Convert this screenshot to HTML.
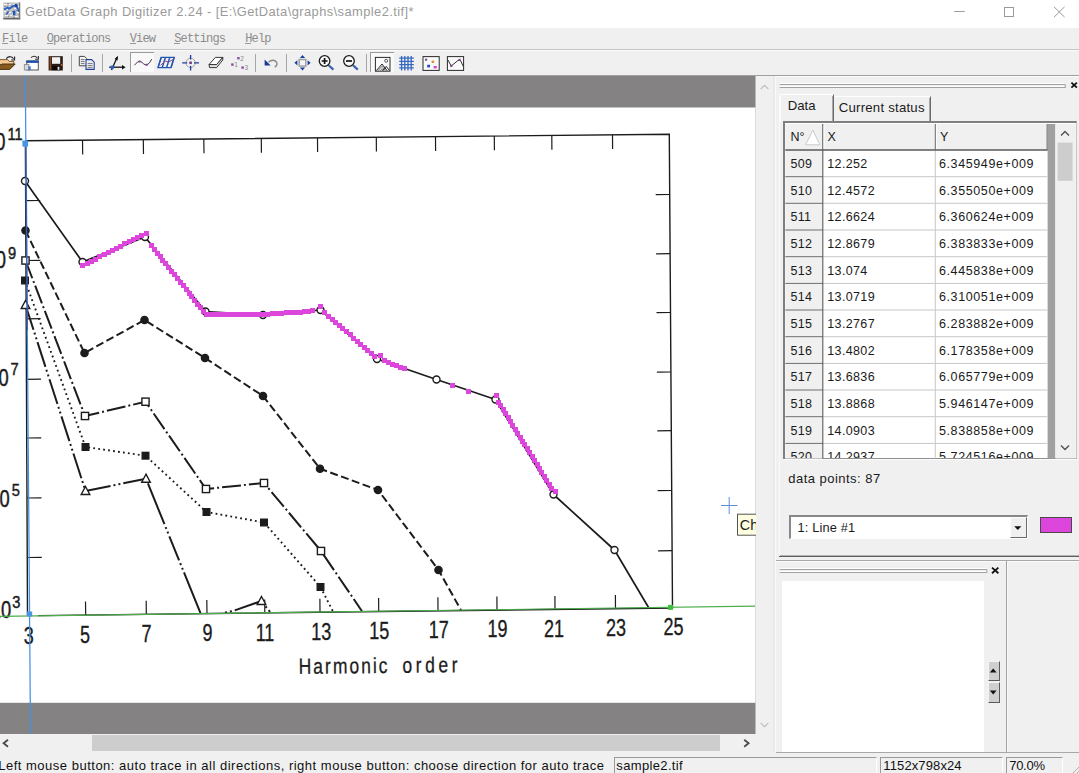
<!DOCTYPE html>
<html>
<head>
<meta charset="utf-8">
<title>GetData Graph Digitizer</title>
<style>
html,body{margin:0;padding:0;background:#f0f0f0;}
body{width:1079px;height:773px;overflow:hidden;font-family:"Liberation Sans",sans-serif;}
#app{position:relative;width:1079px;height:773px;overflow:hidden;background:#f0f0f0;}
.abs{position:absolute;}
#titlebar{left:0;top:0;width:1079px;height:28px;background:#fff;}
#title{left:25px;top:3px;font-size:12.9px;letter-spacing:0.42px;color:#9a9a9a;white-space:nowrap;line-height:18px;}
#menubar{left:0;top:28px;width:1079px;height:21px;background:#f0f0f0;}
.mi{position:absolute;top:5px;font-family:"Liberation Mono",monospace;font-size:12px;letter-spacing:-0.83px;color:#8c8c8c;line-height:12px;white-space:nowrap;}
.mi u{text-decoration:none;position:relative;}.mi u::after{content:"";position:absolute;left:0.3px;width:6px;top:11.4px;height:1px;background:#9a9a9a;}
#toolbar{left:0;top:49px;width:1079px;height:27px;background:#f0f0f0;}
.tsep{position:absolute;top:5px;width:1px;height:18px;background:#a6a6a6;}
.tpress{position:absolute;top:3px;height:21px;background:#f9f9f9;border-left:1px solid #9a9a9a;border-top:1px solid #9a9a9a;box-sizing:border-box;}
.cell{position:absolute;font-size:12.5px;color:#1a1a1a;white-space:nowrap;line-height:14px;}
.sb{font-size:13px;color:#111;white-space:nowrap;line-height:16px;}
</style>
</head>
<body>
<div id="app">

<!-- TITLE BAR -->
<div id="titlebar" class="abs">
  <svg class="abs" style="left:3px;top:2px" width="18" height="18" viewBox="0 0 18 18">
    <rect x="0.3" y="0.5" width="16.9" height="16.9" fill="#c2c2c2"/>
    <path d="M1 2.5h3M6 2.5h2M10 2.5h4M2 5.5h2M11 6.5h2M1 9.5h2M5 10.5h3M14 10.5h2M2 13.5h3M7 13.5h2M12 14.5h3M4 7.5h1M9 12.5h1M15 4.5h1" stroke="#f4f4f4" stroke-width="1"/>
    <path d="M4 1.5h2M8 3.5h3M1 4.5h2M6 6.5h2M13 8.5h2M3 11.5h2M10 15.5h2M5 14.5h1M15 12.5h1M9 9.5h1" stroke="#8e8e8e" stroke-width="1"/>
    <rect x="0.3" y="15.9" width="16.9" height="1.5" fill="#646464"/>
    <rect x="16" y="0.5" width="1.2" height="16.9" fill="#7a7a7a"/>
    <path d="M1 7.6L4.5 5.4L6 6.8L9.5 4.6L13 3L16.2 9.6" fill="none" stroke="#2a62c8" stroke-width="1.8"/>
    <path d="M3.2 12.6l2.4-3.4" stroke="#2a62c8" stroke-width="1.5"/>
    <rect x="9.9" y="8.7" width="2.5" height="4.6" fill="#1d55b8"/>
    <rect x="12" y="2.2" width="2.4" height="2.8" fill="#173f9c"/>
  </svg>
  <div id="title" class="abs">GetData Graph Digitizer 2.24 - [E:\GetData\graphs\sample2.tif]*</div>
  <svg class="abs" style="left:940px;top:0" width="139" height="28" viewBox="940 0 139 28">
    <path d="M954.2 11.5h10.5" stroke="#9a9a9a" stroke-width="1"/>
    <rect x="1004.5" y="7.5" width="9" height="9" fill="none" stroke="#9a9a9a" stroke-width="1"/>
    <path d="M1054 6.8l10.6 10.3M1064.6 6.8L1054 17.1" stroke="#9a9a9a" stroke-width="1"/>
  </svg>
</div>

<!-- MENU BAR -->
<div id="menubar" class="abs">
  <span class="mi" style="left:2px"><u>F</u>ile</span>
  <span class="mi" style="left:46.7px"><u>O</u>perations</span>
  <span class="mi" style="left:129.7px"><u>V</u>iew</span>
  <span class="mi" style="left:174.2px"><u>S</u>ettings</span>
  <span class="mi" style="left:245.2px"><u>H</u>elp</span>
</div>
<div class="abs" style="left:0;top:49px;width:1079px;height:1px;background:#c4c4c4"></div>
<div class="abs" style="left:0;top:50px;width:1079px;height:1px;background:#fbfbfb"></div>

<!-- TOOLBAR -->
<div id="toolbar" class="abs" style="top:51px;height:25px"></div>
<div class="tpress" style="left:130.3px;top:51.7px;width:23.5px;height:20.8px"></div>
<div class="tpress" style="left:370.3px;top:51.7px;width:23.8px;height:20.8px"></div>
<div class="tsep" style="left:70.6px;top:53.6px"></div>
<div class="tsep" style="left:101.5px;top:53.6px"></div>
<div class="tsep" style="left:255.2px;top:53.6px"></div>
<div class="tsep" style="left:286.1px;top:53.6px"></div>
<div class="tsep" style="left:366px;top:53.6px"></div>
<svg class="abs" style="left:0;top:50px" width="480" height="26" viewBox="0 50 480 26">
  <!-- open folder -->
  <g>
    <path d="M-2 59.6h9.6l1.6 1.8h4.6v3.2H-2z" fill="#f5ca92" stroke="#6a4a20" stroke-width="0.9"/>
    <path d="M-3.6 69.4L1.8 64h13.4L9.8 69.4z" fill="#8a5a1c" stroke="#3a2a10" stroke-width="0.9"/>
    <path d="M6.2 58.6c2.4-2.6 5.6-2.6 7.4 0.2" fill="none" stroke="#222" stroke-width="1.1"/>
    <path d="M14.6 56.6v3.4h-3.4" fill="none" stroke="#222" stroke-width="1.1"/>
  </g>
  <!-- reopen window -->
  <g>
    <rect x="26.8" y="61" width="11.5" height="9" fill="#fff" stroke="#555" stroke-width="1"/>
    <rect x="26.3" y="60.5" width="12.5" height="2.4" fill="#1f4fa8"/>
    <rect x="24.3" y="64.5" width="4.6" height="5.5" fill="#d8d8d8" stroke="#888" stroke-width="0.8"/>
    <rect x="28.3" y="66.3" width="2.4" height="3.8" fill="#4a78d0"/>
    <path d="M31 57.6c2.2-2 5-1.8 6.4 0.6" fill="none" stroke="#333" stroke-width="1.1"/>
    <path d="M38.4 56v3.3h-3.3" fill="none" stroke="#333" stroke-width="1.1"/>
  </g>
  <!-- save -->
  <g>
    <rect x="48.6" y="56.2" width="14.2" height="14.3" fill="#2a1a14"/>
    <rect x="49.6" y="56.8" width="1.7" height="13" fill="#8a4a24"/>
    <rect x="52" y="57.2" width="8.2" height="6.6" fill="#f2f2f2"/>
    <rect x="52.3" y="66.2" width="7.6" height="4" fill="#0a0a0a"/>
    <rect x="57.6" y="66.8" width="1.8" height="3" fill="#e8e8e8"/>
    <rect x="60.8" y="64.2" width="1.4" height="1.4" fill="#d88a2a"/>
  </g>
  <!-- copy -->
  <g>
    <path d="M79.3 56.4h5.2l2 2v7.4h-7.2z" fill="#f4f4f4" stroke="#444" stroke-width="1"/>
    <path d="M80.8 59.6h3.8M80.8 61.6h3.8M80.8 63.6h3.8" stroke="#666" stroke-width="0.9"/>
    <path d="M86 59.6h5.6l2.6 2.6v7.2H86z" fill="#f4f4f4" stroke="#1f3f9a" stroke-width="1.1"/>
    <path d="M87.6 63.4h5M87.6 65.4h5M87.6 67.4h5" stroke="#666" stroke-width="0.9"/>
  </g>
  <!-- axes -->
  <g>
    <path d="M111.5 70L117.2 57.2" stroke="#111" stroke-width="1.3"/>
    <path d="M109.2 67.2h13.8" stroke="#111" stroke-width="1.3"/>
    <path d="M118 55.8l-3.4 3.2l3 1.4z" fill="#111"/>
    <path d="M125.6 67.2l-3.6-2.2v4.4z" fill="#111"/>
    <rect x="110.6" y="65.6" width="3.2" height="3.2" fill="#2a5fd0"/>
  </g>
  <!-- curve (pressed) -->
  <g>
    <path d="M134.6 65.2c2.2-3 4.4-4.6 6.2-3.6c2 1 3.4 3.6 5.6 3.2c2.4-0.4 3.8-2.8 5.2-5.6" fill="none" stroke="#333" stroke-width="1"/>
    <rect x="138.6" y="60.6" width="2" height="2" fill="#8a4aa0"/>
    <rect x="145.6" y="63.8" width="2" height="2" fill="#8a4aa0"/>
  </g>
  <!-- grid parallelogram -->
  <g fill="none" stroke="#2456b0" stroke-width="1.2">
    <path d="M161.2 57.4h13L171 67.6h-13z"/>
    <path d="M165.4 57.4l-3.2 10.2M169.8 57.4l-3.2 10.2" stroke-width="1.5"/><path d="M161.2 57.4L158 67.6M174.2 57.4L171 67.6" stroke-width="1.5"/>
    <path d="M160.6 65.4l4.2-4.4l4 1l5.4-3.4" stroke="#8a4aa0" stroke-width="1"/>
  </g>
  <!-- crosshair -->
  <g>
    <circle cx="190.6" cy="62.8" r="4.6" fill="none" stroke="#9a9a9a" stroke-width="0.9"/>
    <path d="M190.6 55v4.6M190.6 66v4.6M182.2 62.8h5M194 62.8h5" stroke="#1a3fa0" stroke-width="1.3"/>
    <rect x="189.3" y="61.5" width="2.6" height="2.6" fill="#7a3a8a"/>
  </g>
  <!-- eraser -->
  <g>
    <path d="M209 64.6l6.4-7.2h7.4l-6.2 7.2z" fill="#fff" stroke="#222" stroke-width="0.9" stroke-linejoin="round"/>
    <path d="M209 64.6h7.6l6.2-7.2v2.6l-6.2 7.6h-7z" fill="#e4e4e4" stroke="#222" stroke-width="0.9" stroke-linejoin="round"/>
  </g>
  <!-- numbered points -->
  <g>
    <rect x="231.2" y="63.4" width="2.4" height="2.4" fill="#8a4aa0"/>
    <rect x="237.2" y="57" width="2.4" height="2.4" fill="#8a4aa0"/>
    <rect x="241.4" y="66.4" width="2.4" height="2.4" fill="#8a4aa0"/>
    <text x="234.2" y="67.4" font-size="6.5" fill="#8a8a8a" font-family="'Liberation Sans',sans-serif">1</text>
    <text x="240.2" y="61" font-size="6.5" fill="#8a8a8a" font-family="'Liberation Sans',sans-serif">2</text>
    <text x="244.6" y="70.4" font-size="6.5" fill="#8a8a8a" font-family="'Liberation Sans',sans-serif">3</text>
  </g>
  <!-- undo -->
  <g>
    <path d="M268.5 62.2c2.6-2.6 6.4-2.6 8 0c1.2 2.2 0 4-1.8 4.8" fill="none" stroke="#8a8a8a" stroke-width="1.4"/>
    <path d="M264.6 59.6v6h6z" fill="#1a3a9a"/>
  </g>
  <!-- pan -->
  <g>
    <rect x="299.2" y="59.5" width="6.6" height="6.6" fill="#f4f4f4" stroke="#a0a0a0" stroke-width="1.5"/>
    <path d="M302.5 55l2.6 3h-5.2zM302.5 70.6l2.6-3h-5.2zM294.4 62.8l3-2.6v5.2zM310.6 62.8l-3-2.6v5.2z" fill="#1a3fa0"/>
  </g>
  <!-- zoom in -->
  <g>
    <path d="M328.6 65.2l4.8 4.4" stroke="#3a62b0" stroke-width="2.2"/>
    <circle cx="324.6" cy="61" r="5.3" fill="#fafafa" stroke="#1a1a1a" stroke-width="1.3"/>
    <path d="M321.6 61h6M324.6 58v6" stroke="#111" stroke-width="1.7"/>
  </g>
  <!-- zoom out -->
  <g>
    <path d="M353 65.2l4.8 4.4" stroke="#3a62b0" stroke-width="2.2"/>
    <circle cx="349" cy="61" r="5.3" fill="#fafafa" stroke="#1a1a1a" stroke-width="1.3"/>
    <path d="M346 61h6" stroke="#111" stroke-width="1.7"/>
  </g>
  <!-- image -->
  <g>
    <rect x="375.4" y="57.4" width="14.6" height="13.8" fill="#fafafa" stroke="#2a2a2a" stroke-width="1"/>
    <circle cx="386.2" cy="60.8" r="1.5" fill="none" stroke="#444" stroke-width="0.9"/>
    <path d="M376.4 70.6l5.6-6.6l5 6.6M382.6 70.6l3.6-4.2l3.4 4.2" fill="none" stroke="#222" stroke-width="1"/>
    <path d="M378.2 70.6l3.8-4.4l3.4 4.4M380.4 70.6l1.6-2l1.6 2" fill="none" stroke="#555" stroke-width="0.8"/>
  </g>
  <!-- grid # -->
  <g stroke="#3468c0" stroke-width="1.3">
    <path d="M401.6 56v14.6M404.8 56v14.6M408 56v14.6M411.2 56v14.6"/>
    <path d="M399.2 58.2h14.6M399.2 61.4h14.6M399.2 64.6h14.6M399.2 67.8h14.6"/>
  </g>
  <!-- points box -->
  <g>
    <rect x="423" y="56.6" width="16.2" height="13.8" fill="#fafafa" stroke="#2a2a2a" stroke-width="1"/>
    <rect x="425" y="58.6" width="2.2" height="2.2" fill="#7a5a90"/>
    <rect x="431.6" y="60.6" width="2.6" height="2.4" fill="#e09030"/>
    <rect x="427.2" y="64.8" width="2.8" height="2.6" fill="#1a4fc0"/>
    <rect x="433.6" y="66" width="3.2" height="2.4" fill="#e040e0"/>
  </g>
  <!-- line box -->
  <g>
    <rect x="447.4" y="56.6" width="16.2" height="13.8" fill="#fafafa" stroke="#2a2a2a" stroke-width="1"/>
    <path d="M448 60l3.2 6l6.6-5.4l2.6-0.4l3 6.4" fill="none" stroke="#333" stroke-width="1"/>
    <rect x="450.2" y="64.8" width="2.2" height="2.2" fill="#7a4a90"/>
    <rect x="458.4" y="58.8" width="2.2" height="2.2" fill="#7a4a90"/>
  </g>
</svg>


<div class="abs" style="left:0;top:75px;width:1079px;height:1px;background:#a0a0a0"></div>
<div class="abs" style="left:776px;top:76px;width:303px;height:1px;background:#fdfdfd"></div>

<!-- CANVAS -->
<svg class="abs" style="left:0;top:76px" width="755.5" height="658" viewBox="0 76 755.5 658" preserveAspectRatio="none" font-family="'Liberation Sans',sans-serif">
<rect x="0" y="76" width="755.5" height="658" fill="#858283"/>
<rect x="0" y="107.5" width="755.5" height="595.3" fill="#ffffff"/>
<g stroke="#1c1c1c" fill="none" stroke-linecap="butt">
<path d="M25.4 141L27.5 615M38 615.6L672.5 608.0L669.3 134.2L25.5 140.8" stroke-width="1.4"/>
<path d="M82.5 140.2L82.7 154.5M143.3 139.6L143.5 153.9M203.8 139.0L204.0 153.3M261.3 138.4L261.4 152.7M317.5 137.8L317.6 152.1M376.3 137.2L376.4 151.5M435.5 136.6L435.6 150.9M494.3 136.0L494.4 150.3M551.8 135.4L551.9 149.7M612.5 134.8L612.6 149.1M85.7 615.0L85.5 601.5M146.3 614.3L146.2 600.8M207.0 613.6L206.8 600.1M264.8 612.9L264.7 599.4M320.0 612.2L319.9 598.7M378.7 611.5L378.6 598.0M438.0 610.8L437.9 597.3M497.0 610.1L496.9 596.6M555.0 609.4L554.9 595.9M615.5 608.6L615.4 595.1M25.7 200.7L40.2 200.5M25.9 260.5L40.4 260.4M26.2 318.8L40.7 318.7M26.5 379.3L41.0 379.2M26.7 438.0L41.2 437.9M27.0 498.0L41.5 497.9M27.3 557.5L41.8 557.4M669.7 194.5L655.7 194.7M670.1 253.7L656.1 253.8M670.5 312.5L656.5 312.6M670.9 372.0L656.9 372.1M671.3 430.7L657.3 430.8M671.7 490.5L657.7 490.6M672.1 550.7L658.1 550.9" stroke-width="1.2"/>
</g>
<g fill="none" stroke="#1c1c1c" stroke-width="2" stroke-linejoin="round">
<polyline points="25.0,181.0 82.5,262.0 145.0,237.0 205.5,311.5 263.0,315.0 320.5,310.0 377.0,359.0 436.5,379.5 495.5,399.5 553.5,494.5 614.5,550.0 649.0,608.3" stroke-width="1.7"/>
<polyline points="25.5,230.5 84.5,353.0 144.5,320.0 205.0,358.0 263.0,396.0 320.0,468.7 378.0,490.0 438.5,570.0 461.0,610.2" stroke-dasharray="8 3.5"/>
<polyline points="25.5,260.5 85.0,416.0 145.5,401.7 206.0,489.0 264.0,483.0 321.0,551.0 362.0,611.2" stroke-dasharray="19 3 2 3"/>
<polyline points="25.0,280.5 85.5,447.0 145.5,455.7 206.5,512.0 264.0,522.5 320.5,587.0 333.0,611.5" stroke-dasharray="1.8 3.2" stroke-width="1.9"/>
<polyline points="25.5,305.0 85.5,491.0 146.0,478.7" stroke-dasharray="26 3 2 3 2 3"/>
<polyline points="200.5,613.2 146.0,478.7" stroke-dasharray="44 3 2 3 2 3 26 3 2 3 2 3"/>
<polyline points="225.0,612.5 233.0,611.0 261.5,601.0 270.0,612.0" stroke-dasharray="2 3 2 3 30 0"/>
</g>
<g stroke="#1c1c1c" stroke-width="1.4">
<circle cx="25" cy="181" r="3.5" fill="#fff"/>
<circle cx="82.5" cy="262" r="3.5" fill="#fff"/>
<circle cx="145" cy="237" r="3.5" fill="#fff"/>
<circle cx="205.5" cy="311.5" r="3.5" fill="#fff"/>
<circle cx="263" cy="315" r="3.5" fill="#fff"/>
<circle cx="320.5" cy="310" r="3.5" fill="#fff"/>
<circle cx="377" cy="359" r="3.5" fill="#fff"/>
<circle cx="436.5" cy="379.5" r="3.5" fill="#fff"/>
<circle cx="495.5" cy="399.5" r="3.5" fill="#fff"/>
<circle cx="553.5" cy="494.5" r="3.5" fill="#fff"/>
<circle cx="614.5" cy="550" r="3.5" fill="#fff"/>
<circle cx="25.5" cy="230.5" r="3.6" fill="#1c1c1c"/>
<circle cx="84.5" cy="353" r="3.6" fill="#1c1c1c"/>
<circle cx="144.5" cy="320" r="3.6" fill="#1c1c1c"/>
<circle cx="205" cy="358" r="3.6" fill="#1c1c1c"/>
<circle cx="263" cy="396" r="3.6" fill="#1c1c1c"/>
<circle cx="320" cy="468.7" r="3.6" fill="#1c1c1c"/>
<circle cx="378" cy="490" r="3.6" fill="#1c1c1c"/>
<circle cx="438.5" cy="570" r="3.6" fill="#1c1c1c"/>
<rect x="21.9" y="256.9" width="7.2" height="7.2" fill="#fff"/>
<rect x="81.4" y="412.4" width="7.2" height="7.2" fill="#fff"/>
<rect x="141.9" y="398.1" width="7.2" height="7.2" fill="#fff"/>
<rect x="202.4" y="485.4" width="7.2" height="7.2" fill="#fff"/>
<rect x="260.4" y="479.4" width="7.2" height="7.2" fill="#fff"/>
<rect x="317.4" y="547.4" width="7.2" height="7.2" fill="#fff"/>
<rect x="21.7" y="277.2" width="6.6" height="6.6" fill="#1c1c1c"/>
<rect x="82.2" y="443.7" width="6.6" height="6.6" fill="#1c1c1c"/>
<rect x="142.2" y="452.4" width="6.6" height="6.6" fill="#1c1c1c"/>
<rect x="203.2" y="508.7" width="6.6" height="6.6" fill="#1c1c1c"/>
<rect x="260.7" y="519.2" width="6.6" height="6.6" fill="#1c1c1c"/>
<rect x="317.2" y="583.7" width="6.6" height="6.6" fill="#1c1c1c"/>
<path d="M25.5 300.5L29.8 308.5L21.2 308.5Z" fill="#fff"/>
<path d="M85.5 486.5L89.8 494.5L81.2 494.5Z" fill="#fff"/>
<path d="M146 474.2L150.3 482.2L141.7 482.2Z" fill="#fff"/>
<path d="M261.5 596.5L265.8 604.5L257.2 604.5Z" fill="#fff"/>
</g>
<path d="M80 263h5v5h-5zM85 261h5v5h-5zM89 259h5v5h-5zM93 257h5v5h-5zM97 254h5v5h-5zM102 252h5v5h-5zM106 250h5v5h-5zM110 248h5v5h-5zM114 246h5v5h-5zM118 244h5v5h-5zM122 241h5v5h-5zM127 239h5v5h-5zM131 237h5v5h-5zM135 235h5v5h-5zM139 233h5v5h-5zM144 231h5v5h-5zM149 243h5v5h-5zM152 247h5v5h-5zM155 251h5v5h-5zM158 254h5v5h-5zM160 258h5v5h-5zM163 261h5v5h-5zM166 265h5v5h-5zM169 269h5v5h-5zM172 272h5v5h-5zM175 276h5v5h-5zM178 280h5v5h-5zM181 283h5v5h-5zM184 287h5v5h-5zM187 291h5v5h-5zM189 294h5v5h-5zM192 298h5v5h-5zM195 302h5v5h-5zM198 305h5v5h-5zM201 309h5v5h-5zM201 309h5v5h-5zM204 312h5v5h-5zM204 312h5v5h-5zM209 312h5v5h-5zM214 312h5v5h-5zM218 312h5v5h-5zM223 312h5v5h-5zM228 312h5v5h-5zM232 312h5v5h-5zM237 312h5v5h-5zM242 312h5v5h-5zM246 312h5v5h-5zM251 312h5v5h-5zM256 312h5v5h-5zM260 312h5v5h-5zM260 312h5v5h-5zM265 312h5v5h-5zM270 311h5v5h-5zM274 311h5v5h-5zM279 311h5v5h-5zM284 310h5v5h-5zM288 310h5v5h-5zM293 310h5v5h-5zM298 310h5v5h-5zM298 310h5v5h-5zM302 309h5v5h-5zM306 309h5v5h-5zM310 308h5v5h-5zM318 304h5v5h-5zM318 304h5v5h-5zM322 310h5v5h-5zM326 314h5v5h-5zM330 317h5v5h-5zM333 320h5v5h-5zM337 323h5v5h-5zM340 326h5v5h-5zM344 329h5v5h-5zM348 332h5v5h-5zM351 336h5v5h-5zM355 339h5v5h-5zM358 342h5v5h-5zM362 345h5v5h-5zM365 348h5v5h-5zM369 351h5v5h-5zM372 354h5v5h-5zM378 353h5v5h-5zM378 353h5v5h-5zM382 358h5v5h-5zM386 360h5v5h-5zM390 362h5v5h-5zM394 363h5v5h-5zM398 365h5v5h-5zM402 366h5v5h-5zM450 383h5v5h-5zM450 383h5v5h-5zM466 389h5v5h-5zM466 389h5v5h-5zM494 393h5v5h-5zM494 393h5v5h-5zM496 400h5v5h-5zM498 403h5v5h-5zM501 407h5v5h-5zM503 411h5v5h-5zM506 415h5v5h-5zM508 419h5v5h-5zM510 423h5v5h-5zM513 427h5v5h-5zM515 431h5v5h-5zM518 435h5v5h-5zM520 439h5v5h-5zM522 442h5v5h-5zM525 446h5v5h-5zM527 450h5v5h-5zM530 454h5v5h-5zM532 458h5v5h-5zM535 462h5v5h-5zM537 466h5v5h-5zM539 470h5v5h-5zM542 474h5v5h-5zM544 478h5v5h-5zM547 482h5v5h-5zM549 486h5v5h-5zM549 486h5v5h-5zM553 489h5v5h-5z" fill="#dc46dc"/>
<g fill="#1c1c1c" stroke="#1c1c1c" stroke-width="0.35" font-size="24" text-anchor="middle">
<text transform="translate(28.7 643.8) scale(0.75 1)">3</text>
<text transform="translate(85.0 643.0) scale(0.75 1)">5</text>
<text transform="translate(146.5 642.2) scale(0.75 1)">7</text>
<text transform="translate(207.5 641.3) scale(0.75 1)">9</text>
<text transform="translate(265.0 640.5) scale(0.75 1)">11</text>
<text transform="translate(321.3 639.7) scale(0.75 1)">13</text>
<text transform="translate(379.3 638.9) scale(0.75 1)">15</text>
<text transform="translate(438.8 638.1) scale(0.75 1)">17</text>
<text transform="translate(497.5 637.3) scale(0.75 1)">19</text>
<text transform="translate(554.0 636.5) scale(0.75 1)">21</text>
<text transform="translate(616.0 635.6) scale(0.75 1)">23</text>
<text transform="translate(673.5 634.8) scale(0.75 1)">25</text>
</g>
<g fill="#1c1c1c" stroke="#1c1c1c">
<text transform="translate(5.5 150.1) scale(0.78 1)" font-size="23.5" text-anchor="end" stroke-width="0.45">10</text>
<text transform="translate(7.5 139.6) scale(0.9 1)" font-size="16.3" stroke-width="0.45">11</text>
<text transform="translate(5.9 268.0) scale(0.78 1)" font-size="23.5" text-anchor="end" stroke-width="0.45">10</text>
<text transform="translate(8.1 258.5) scale(0.9 1)" font-size="16.3" stroke-width="0.45">9</text>
<text transform="translate(8.8 385.7) scale(0.78 1)" font-size="23.5" text-anchor="end" stroke-width="0.45">10</text>
<text transform="translate(10.4 374.9) scale(0.9 1)" font-size="16.3" stroke-width="0.45">7</text>
<text transform="translate(9.7 506.5) scale(0.78 1)" font-size="23.5" text-anchor="end" stroke-width="0.45">10</text>
<text transform="translate(11.7 496.4) scale(0.9 1)" font-size="16.3" stroke-width="0.45">5</text>
<text transform="translate(11.2 617.7) scale(0.78 1)" font-size="23.5" text-anchor="end" stroke-width="0.45">10</text>
<text transform="translate(12.2 608.1) scale(0.9 1)" font-size="16.3" stroke-width="0.45">3</text>
</g>
<text transform="translate(298.7 673.8) rotate(-0.6) scale(0.8 1)" font-size="21.8" fill="#1c1c1c" textLength="111.1" lengthAdjust="spacing" stroke="#1c1c1c" stroke-width="0.3">Harmonic</text>
<text transform="translate(402.5 672.7) rotate(-0.6) scale(0.8 1)" font-size="21.8" fill="#1c1c1c" textLength="68.8" lengthAdjust="spacing" stroke="#1c1c1c" stroke-width="0.3">order</text>
<path d="M0 616.3L755 606.2" stroke="#4cae4c" stroke-width="1.2"/>
<path d="M25.3 76L30.5 734" stroke="#4590e6" stroke-width="1.25"/>
<path d="M25.9 146.8L27.3 330" stroke="#2c3f8c" stroke-width="1.6" opacity="0.55"/>
<rect x="22.4" y="140.5" width="5.7" height="6.2" rx="0.8" fill="#4a94e6"/>
<rect x="26.8" y="611.5" width="5.4" height="4.9" fill="#4a94e6"/>
<rect x="668" y="604.9" width="5" height="5" fill="#3fbf3f"/>
<path d="M721 505.5h16.5M729.2 497v17" stroke="#5b8fd0" stroke-width="1"/>
<rect x="737.5" y="514.2" width="20" height="21" fill="#ffffe1" stroke="#555" stroke-width="1"/>
<text x="739.8" y="529.7" font-size="14.4" fill="#222">Ch</text>
</svg>

<!-- SCROLLBARS -->
<!-- vertical scrollbar of canvas -->
<div class="abs" style="left:755.5px;top:76px;width:17.8px;height:676px;background:#f0f0f0"></div>
<svg class="abs" style="left:755px;top:76px" width="19" height="660" viewBox="755 76 19 660">
  <path d="M760.6 89.2l3.9-3.9l3.9 3.9" fill="none" stroke="#bdbdbd" stroke-width="1.1"/>
  <path d="M760.6 722.8l3.9 3.9l3.9-3.9" fill="none" stroke="#bdbdbd" stroke-width="1.1"/>
</svg>
<div class="abs" style="left:773.3px;top:76px;width:1.4px;height:676px;background:#e9e9e9"></div>
<div class="abs" style="left:774.7px;top:76px;width:1.3px;height:676px;background:#fafafa"></div>
<!-- horizontal scrollbar -->
<div class="abs" style="left:0;top:734px;width:755.5px;height:18.3px;background:#f0f0f0"></div>
<div class="abs" style="left:92px;top:735.3px;width:628px;height:15.4px;background:#cdcdcd"></div>
<svg class="abs" style="left:0;top:734px" width="755" height="18" viewBox="0 734 755 18">
  <path d="M8 739.8L3.6 743.3L8 746.8" fill="none" stroke="#4a4a4a" stroke-width="1.8"/>
  <path d="M744.2 739.8L748.6 743.3L744.2 746.8" fill="none" stroke="#4a4a4a" stroke-width="1.8"/>
</svg>


<!-- RIGHT PANEL -->
<div class="abs" style="left:776px;top:77px;width:303px;height:675px;background:#f0f0f0"></div>
<svg class="abs" style="left:776px;top:76px" width="303" height="50" viewBox="776 76 303 50">
<path d="M779.7 83.6H1064.3M779.7 86.6H1064.3" fill="none" stroke="#ffffff" stroke-width="1"/>
<path d="M779.7 84.5H1065.3V88M779.7 87.5H1065" fill="none" stroke="#a2a2a2" stroke-width="1"/>
<path d="M1071.4 82.7L1076.9 87.7M1076.9 82.7L1071.4 87.7" stroke="#111" stroke-width="1.8"/>
</svg>
<div class="abs" style="left:778.8px;top:96px;width:1px;height:459px;background:#fafafa"></div>
<div class="abs" style="left:780px;top:94.3px;width:54px;height:27.7px;box-sizing:border-box;border-left:1px solid #fdfdfd;border-top:1px solid #fdfdfd;border-right:1px solid #6a6a6a;background:#f0f0f0"></div>
<div class="abs" style="left:832.2px;top:96px;width:1px;height:25px;background:#a8a8a8"></div>
<div class="abs" style="left:834.3px;top:96.3px;width:96.4px;height:24.7px;box-sizing:border-box;border-top:1px solid #fdfdfd;border-right:1px solid #6a6a6a;background:#f0f0f0"></div>
<div class="abs" style="left:928.7px;top:98px;width:1px;height:23px;background:#a8a8a8"></div>
<div class="abs" id="tab1" style="left:787.7px;top:98px;font-size:13.2px;color:#1a1a1a;line-height:15px;white-space:nowrap">Data</div>
<div class="abs" id="tab2" style="left:838.7px;top:100px;font-size:13.2px;letter-spacing:0.23px;color:#1a1a1a;line-height:15px;white-space:nowrap">Current status</div>
<div class="abs" style="left:833px;top:121px;width:246px;height:1px;background:#fdfdfd"></div>
<div class="abs" style="left:783.3px;top:121.2px;width:293.4000000000001px;height:338.1px;box-sizing:border-box;background:#fff;border-left:2px solid #7f7f7f;border-top:2.6px solid #7f7f7f;border-right:1px solid #c4c4c4;border-bottom:1px solid #8e8e8e;overflow:hidden"></div>
<div class="abs" style="left:783.3px;top:459.0px;width:294.4000000000001px;height:1px;background:#fdfdfd"></div>
<svg class="abs" style="left:784px;top:123px" width="293" height="336" viewBox="784 123 293 336">
<rect x="785.3" y="124" width="262.3" height="26" fill="#f0f0f0"/>
<rect x="785.3" y="150" width="37.5" height="308.5" fill="#f0f0f0"/>
<rect x="1047.6" y="124" width="7.8" height="334.5" fill="#a0a0a0"/>
<rect x="1055.4" y="124" width="20.4" height="334.5" fill="#f0f0f0"/>
<rect x="1057.6" y="142.6" width="15" height="38.2" fill="#cdcdcd"/>
<path d="M1061 135.6l4-4l4 4" fill="none" stroke="#505050" stroke-width="1.4"/>
<path d="M1061 445.6l4 4l4-4" fill="none" stroke="#505050" stroke-width="1.4"/>
<path d="M822.8 176.7H1047.6M822.8 203.3H1047.6M822.8 230.0H1047.6M822.8 256.7H1047.6M822.8 283.4H1047.6M822.8 310.0H1047.6M822.8 336.7H1047.6M822.8 363.4H1047.6M822.8 390.0H1047.6M822.8 416.7H1047.6M822.8 443.4H1047.6M935.3 150V458.5" stroke="#c8c8c8" stroke-width="1" fill="none"/>
<path d="M785.3 176.7H822.8M785.3 203.3H822.8M785.3 230.0H822.8M785.3 256.7H822.8M785.3 283.4H822.8M785.3 310.0H822.8M785.3 336.7H822.8M785.3 363.4H822.8M785.3 390.0H822.8M785.3 416.7H822.8M785.3 443.4H822.8" stroke="#6e6e6e" stroke-width="1" fill="none"/>
<path d="M822.8 124V458.5" stroke="#5a5a5a" stroke-width="1.1" fill="none"/>
<path d="M785.3 150H1047.6" stroke="#5a5a5a" stroke-width="1.3" fill="none"/>
<path d="M935.3 124V150M1047.1 124V150" stroke="#6a6a6a" stroke-width="1" fill="none"/>
<path d="M824 124.6V149M936.5 124.6V149" stroke="#fdfdfd" stroke-width="1" fill="none"/>
<path d="M805.6 144.8L812.8 130.2L820 144.8Z" fill="#fff" stroke="#c9c9c9" stroke-width="1"/>
</svg>
<div class="abs" style="left:784px;top:124px;width:264px;height:334px;overflow:hidden">
<div class="cell" style="left:6.6px;top:6.3px">N°</div>
<div class="cell" style="left:43.5px;top:6.3px">X</div>
<div class="cell" style="left:156.0px;top:6.3px">Y</div>
<div class="cell" style="left:6.6px;top:33.0px;letter-spacing:0.2px">509</div>
<div class="cell" style="left:43.3px;top:33.0px;letter-spacing:0.35px">12.252</div>
<div class="cell" style="left:155.0px;top:33.0px;letter-spacing:0.6px">6.345949e+009</div>
<div class="cell" style="left:6.6px;top:59.7px;letter-spacing:0.2px">510</div>
<div class="cell" style="left:43.3px;top:59.7px;letter-spacing:0.35px">12.4572</div>
<div class="cell" style="left:155.0px;top:59.7px;letter-spacing:0.6px">6.355050e+009</div>
<div class="cell" style="left:6.6px;top:86.3px;letter-spacing:0.2px">511</div>
<div class="cell" style="left:43.3px;top:86.3px;letter-spacing:0.35px">12.6624</div>
<div class="cell" style="left:155.0px;top:86.3px;letter-spacing:0.6px">6.360624e+009</div>
<div class="cell" style="left:6.6px;top:113.0px;letter-spacing:0.2px">512</div>
<div class="cell" style="left:43.3px;top:113.0px;letter-spacing:0.35px">12.8679</div>
<div class="cell" style="left:155.0px;top:113.0px;letter-spacing:0.6px">6.383833e+009</div>
<div class="cell" style="left:6.6px;top:139.7px;letter-spacing:0.2px">513</div>
<div class="cell" style="left:43.3px;top:139.7px;letter-spacing:0.35px">13.074</div>
<div class="cell" style="left:155.0px;top:139.7px;letter-spacing:0.6px">6.445838e+009</div>
<div class="cell" style="left:6.6px;top:166.4px;letter-spacing:0.2px">514</div>
<div class="cell" style="left:43.3px;top:166.4px;letter-spacing:0.35px">13.0719</div>
<div class="cell" style="left:155.0px;top:166.4px;letter-spacing:0.6px">6.310051e+009</div>
<div class="cell" style="left:6.6px;top:193.0px;letter-spacing:0.2px">515</div>
<div class="cell" style="left:43.3px;top:193.0px;letter-spacing:0.35px">13.2767</div>
<div class="cell" style="left:155.0px;top:193.0px;letter-spacing:0.6px">6.283882e+009</div>
<div class="cell" style="left:6.6px;top:219.7px;letter-spacing:0.2px">516</div>
<div class="cell" style="left:43.3px;top:219.7px;letter-spacing:0.35px">13.4802</div>
<div class="cell" style="left:155.0px;top:219.7px;letter-spacing:0.6px">6.178358e+009</div>
<div class="cell" style="left:6.6px;top:246.4px;letter-spacing:0.2px">517</div>
<div class="cell" style="left:43.3px;top:246.4px;letter-spacing:0.35px">13.6836</div>
<div class="cell" style="left:155.0px;top:246.4px;letter-spacing:0.6px">6.065779e+009</div>
<div class="cell" style="left:6.6px;top:273.0px;letter-spacing:0.2px">518</div>
<div class="cell" style="left:43.3px;top:273.0px;letter-spacing:0.35px">13.8868</div>
<div class="cell" style="left:155.0px;top:273.0px;letter-spacing:0.6px">5.946147e+009</div>
<div class="cell" style="left:6.6px;top:299.7px;letter-spacing:0.2px">519</div>
<div class="cell" style="left:43.3px;top:299.7px;letter-spacing:0.35px">14.0903</div>
<div class="cell" style="left:155.0px;top:299.7px;letter-spacing:0.6px">5.838858e+009</div>
<div class="cell" style="left:6.6px;top:326.4px;letter-spacing:0.2px">520</div>
<div class="cell" style="left:43.3px;top:326.4px;letter-spacing:0.35px">14.2937</div>
<div class="cell" style="left:155.0px;top:326.4px;letter-spacing:0.6px">5.724516e+009</div>
</div>
<div class="abs" id="dp" style="left:788.3px;top:471px;font-size:13px;letter-spacing:0.47px;color:#1a1a1a;line-height:15px;white-space:nowrap">data points: 87</div>
<div class="abs" style="left:788.8px;top:515px;width:238.8px;height:24.3px;box-sizing:border-box;background:#fff;border-left:2px solid #888;border-top:2px solid #888;border-right:1px solid #fdfdfd;border-bottom:1px solid #fdfdfd"></div>
<div class="abs" id="cb" style="left:797.5px;top:520px;font-size:12.8px;letter-spacing:0.15px;color:#1a1a1a;line-height:15px;white-space:nowrap">1: Line #1</div>
<div class="abs" style="left:1009.6px;top:516.7px;width:17px;height:21.8px;box-sizing:border-box;background:#f0f0f0;border-left:1px solid #fdfdfd;border-top:1px solid #fdfdfd;border-right:1.3px solid #6a6a6a;border-bottom:1.3px solid #6a6a6a"></div>
<svg class="abs" style="left:1012px;top:524px" width="12" height="8" viewBox="0 0 12 8"><path d="M2.2 2.2h7.2L5.8 6z" fill="#111"/></svg>
<div class="abs" style="left:1040px;top:516.7px;width:31.8px;height:16.8px;box-sizing:border-box;background:#dc46dc;border:1px solid #4a4a4a"></div>
<div class="abs" style="left:779px;top:555.6px;width:300px;height:1.4px;background:#5f5f5f"></div>
<div class="abs" style="left:780px;top:554.6px;width:299px;height:1px;background:#b4b4b4"></div>
<div class="abs" style="left:776px;top:560px;width:303px;height:1px;background:#a8a8a8"></div>
<div class="abs" style="left:776px;top:561px;width:303px;height:1px;background:#fbfbfb"></div>
<svg class="abs" style="left:776px;top:562px" width="303" height="20" viewBox="776 562 303 20">
<path d="M779.7 568.6H986M779.7 571.6H986" fill="none" stroke="#ffffff" stroke-width="1"/>
<path d="M779.7 569.5H986.8V573M779.7 572.5H986.5" fill="none" stroke="#a2a2a2" stroke-width="1"/>
<path d="M992 567.6L998.4 573.2M998.4 567.6L992 573.2" stroke="#111" stroke-width="1.8"/>
</svg>
<div class="abs" style="left:781.8px;top:581.3px;width:202px;height:171px;background:#fff"></div>
<div class="abs" style="left:1005.7px;top:561px;width:1px;height:191.5px;background:#a3a3a3"></div>
<div class="abs" style="left:1006.7px;top:561px;width:1px;height:191.5px;background:#f8f8f8"></div>
<div class="abs" style="left:987.5px;top:660.7px;width:12.3px;height:20.4px;box-sizing:border-box;background:#cfcfcf;border-left:1px solid #f4f4f4;border-top:1px solid #f4f4f4;border-right:1.3px solid #5a5a5a;border-bottom:1.3px solid #5a5a5a"></div>
<svg class="abs" style="left:989px;top:666.7px" width="9" height="7" viewBox="0 0 9 7"><path d="M0.8 5.6h6.8L4.2 1.6z" fill="#111"/></svg>
<div class="abs" style="left:987.5px;top:682.2px;width:12.3px;height:20.4px;box-sizing:border-box;background:#cfcfcf;border-left:1px solid #f4f4f4;border-top:1px solid #f4f4f4;border-right:1.3px solid #5a5a5a;border-bottom:1.3px solid #5a5a5a"></div>
<svg class="abs" style="left:989px;top:688.7px" width="9" height="7" viewBox="0 0 9 7"><path d="M0.8 1.4h6.8L4.2 5.4z" fill="#111"/></svg>

<!-- STATUS BAR -->
<div class="abs" style="left:0;top:752.3px;width:1079px;height:21px;background:#f0f0f0"></div>
<div class="abs" style="left:776px;top:752px;width:303px;height:1px;background:#a8a8a8"></div>
<div class="abs sb" style="left:-1.8px;top:757.5px;letter-spacing:0.505px" id="sbtext">Left mouse button: auto trace in all directions, right mouse button: choose direction for auto trace</div>
<div class="abs" style="left:613.5px;top:757px;width:263px;height:17px;border-left:1px solid #9a9a9a;border-top:1px solid #9a9a9a;border-right:1px solid #fff;box-sizing:border-box"></div>
<div class="abs sb" style="left:616.3px;top:757.5px;letter-spacing:0.35px" id="sb2">sample2.tif</div>
<div class="abs" style="left:880px;top:757px;width:122.5px;height:17px;border-left:1px solid #9a9a9a;border-top:1px solid #9a9a9a;border-right:1px solid #fff;box-sizing:border-box"></div>
<div class="abs sb" style="left:883.3px;top:757.5px;letter-spacing:0.12px" id="sb3">1152x798x24</div>
<div class="abs" style="left:1005.8px;top:757px;width:57.5px;height:17px;border-left:1px solid #9a9a9a;border-top:1px solid #9a9a9a;border-right:1px solid #fff;box-sizing:border-box"></div>
<div class="abs sb" style="left:1009.2px;top:757.5px;letter-spacing:-0.27px" id="sb4">70.0%</div>
<svg class="abs" style="left:1065.5px;top:760px" width="15" height="13" viewBox="0 0 15 13">
  <path d="M7 13L15 5M11 13L15 9" stroke="#b0b0b0" stroke-width="1"/>
</svg>


</div>
</body>
</html>
